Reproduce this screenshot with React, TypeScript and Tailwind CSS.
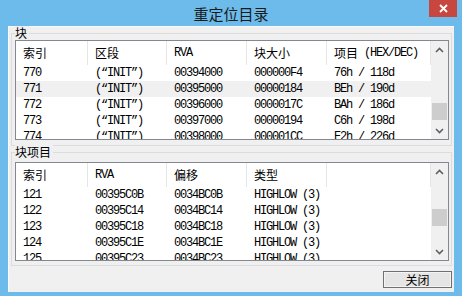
import React from "react";

const cjk = '"Noto Sans CJK SC", "Noto Sans", sans-serif';
const mono = '"Liberation Mono", "Noto Sans CJK SC", monospace';

type Col = { title: string; w: number; mono?: boolean };

const blockCols: Col[] = [
  { title: "索引", w: 72 },
  { title: "区段", w: 79 },
  { title: "RVA", w: 80, mono: true },
  { title: "块大小", w: 80 },
  { title: "项目 (HEX/DEC)", w: 0 },
];

const blockRows = [
  ["770", "(“INIT”)", "00394000", "000000F4", "76h / 118d"],
  ["771", "(“INIT”)", "00395000", "00000184", "BEh / 190d"],
  ["772", "(“INIT”)", "00396000", "0000017C", "BAh / 186d"],
  ["773", "(“INIT”)", "00397000", "00000194", "C6h / 198d"],
  ["774", "(“INIT”)", "00398000", "000001CC", "E2h / 226d"],
];

const entryCols: Col[] = [
  { title: "索引", w: 72 },
  { title: "RVA", w: 79, mono: true },
  { title: "偏移", w: 80 },
  { title: "类型", w: 80 },
  { title: "", w: 0 },
];

const entryRows = [
  ["121", "00395C0B", "0034BC0B", "HIGHLOW (3)", ""],
  ["122", "00395C14", "0034BC14", "HIGHLOW (3)", ""],
  ["123", "00395C18", "0034BC18", "HIGHLOW (3)", ""],
  ["124", "00395C1E", "0034BC1E", "HIGHLOW (3)", ""],
  ["125", "00395C23", "0034BC23", "HIGHLOW (3)", ""],
];

function Chevron({ up }: { up?: boolean }) {
  return (
    <svg width="9" height="6" viewBox="0 0 9 6">
      <path
        d={up ? "M1 5 L4.5 1.5 L8 5" : "M1 1 L4.5 4.5 L8 1"}
        fill="none"
        stroke="#606060"
        strokeWidth="1.6"
      />
    </svg>
  );
}

function ScrollBar({ thumbTop }: { thumbTop: number }) {
  return (
    <div className="flex w-[17px] shrink-0 flex-col bg-[#f0f0f0]">
      <div className="grid h-[17px] place-items-center">
        <Chevron up />
      </div>
      <div className="flex flex-1 flex-col px-px">
        <div style={{ height: thumbTop }} />
        <div className="h-[17px] bg-[#cdcdcd]" />
      </div>
      <div className="grid h-[17px] place-items-center">
        <Chevron />
      </div>
    </div>
  );
}

function ListView({
  cols,
  rows,
  height,
  thumbTop,
  hot,
}: {
  cols: Col[];
  rows: string[][];
  height: number;
  thumbTop: number;
  hot?: number;
}) {
  return (
    <div
      className="flex border border-[#828790] bg-white"
      style={{ height }}
    >
      <div className="flex min-w-0 flex-1 flex-col overflow-hidden">
        <div className="flex h-[24px] shrink-0 items-center">
          {cols.map((c, i) => (
            <div
              key={i}
              className={`flex h-full items-center border-r border-[#e5e5e5] pl-[7px] text-[12px] text-black ${
                c.w ? "shrink-0" : "flex-1"
              }`}
              style={{
                width: c.w || undefined,
                fontFamily: c.mono ? mono : cjk,
                letterSpacing: c.mono ? "-1.2px" : undefined,
              }}
            >
              {c.title.includes("(") ? (
                <>
                  <span style={{ fontFamily: cjk }}>项目</span>
                  <span className="tracking-[-1.2px]" style={{ fontFamily: mono }}>
                    &nbsp;(HEX/DEC)
                  </span>
                </>
              ) : (
                c.title
              )}
            </div>
          ))}
        </div>
        {rows.map((r, ri) => (
          <div
            key={ri}
            className={`flex h-[16px] shrink-0 items-center ${
              ri === hot ? "bg-[#f0f0f0]" : ""
            }`}
          >
            {r.map((v, ci) => (
              <div
                key={ci}
                className={`whitespace-pre pl-[7px] text-[12px] leading-[16px] tracking-[-1.2px] text-black ${
                  cols[ci].w ? "shrink-0" : "flex-1"
                }`}
                style={{ width: cols[ci].w || undefined, fontFamily: mono }}
              >
                {v}
              </div>
            ))}
          </div>
        ))}
      </div>
      <ScrollBar thumbTop={thumbTop} />
    </div>
  );
}

function GroupBox({
  label,
  children,
  className,
}: {
  label: string;
  children: React.ReactNode;
  className: string;
}) {
  return (
    <div className={`relative mx-[2px] border border-[#dcdcdc] ${className}`}>
      <span
        className="absolute left-[3px] top-[-8px] bg-[#f0f0f0] pr-[2px] text-[12px] leading-[14px] text-black"
        style={{ fontFamily: cjk }}
      >
        {label}
      </span>
      {children}
    </div>
  );
}

export default function App() {
  return (
    <div className="flex h-[296px] w-[462px] flex-col bg-[#6cbbea]">
      <div className="relative flex h-[26px] shrink-0 items-center justify-center">
        <span
          className="text-[15px] leading-none text-[#1a1a1a]"
          style={{ fontFamily: cjk }}
        >
          重定位目录
        </span>
        <div className="absolute right-[5px] top-0 grid h-[17px] w-[28px] place-items-center bg-[#c7463f]">
          <svg width="9" height="9" viewBox="0 0 9 9">
            <path d="M1 1 L8 8 M8 1 L1 8" stroke="#fff" strokeWidth="1.8" />
          </svg>
        </div>
      </div>
      <div className="mx-[8px] mb-[4px] flex flex-1 flex-col border-l border-t border-[#fafafa] bg-[#f0f0f0]">
        <GroupBox label="块" className="mt-[6px] pb-[5px] pl-[3px] pr-[2px] pt-[6px]">
          <ListView
            cols={blockCols}
            rows={blockRows}
            height={100}
            thumbTop={45}
            hot={1}
          />
        </GroupBox>
        <GroupBox label="块项目" className="mt-[6px] pb-[4px] pl-[3px] pr-[2px] pt-[9px]">
          <ListView cols={entryCols} rows={entryRows} height={99} thumbTop={29} />
        </GroupBox>
        <div className="mt-[5px] flex justify-end pr-[2px]">
          <div className="flex h-[17px] w-[69px] items-center justify-center border border-[#707070] bg-[#e5e5e5] shadow-[inset_0_0_0_1px_#f4f4f4]">
            <span className="text-[12px] leading-none text-black" style={{ fontFamily: cjk }}>
              关闭
            </span>
          </div>
        </div>
      </div>
    </div>
  );
}
